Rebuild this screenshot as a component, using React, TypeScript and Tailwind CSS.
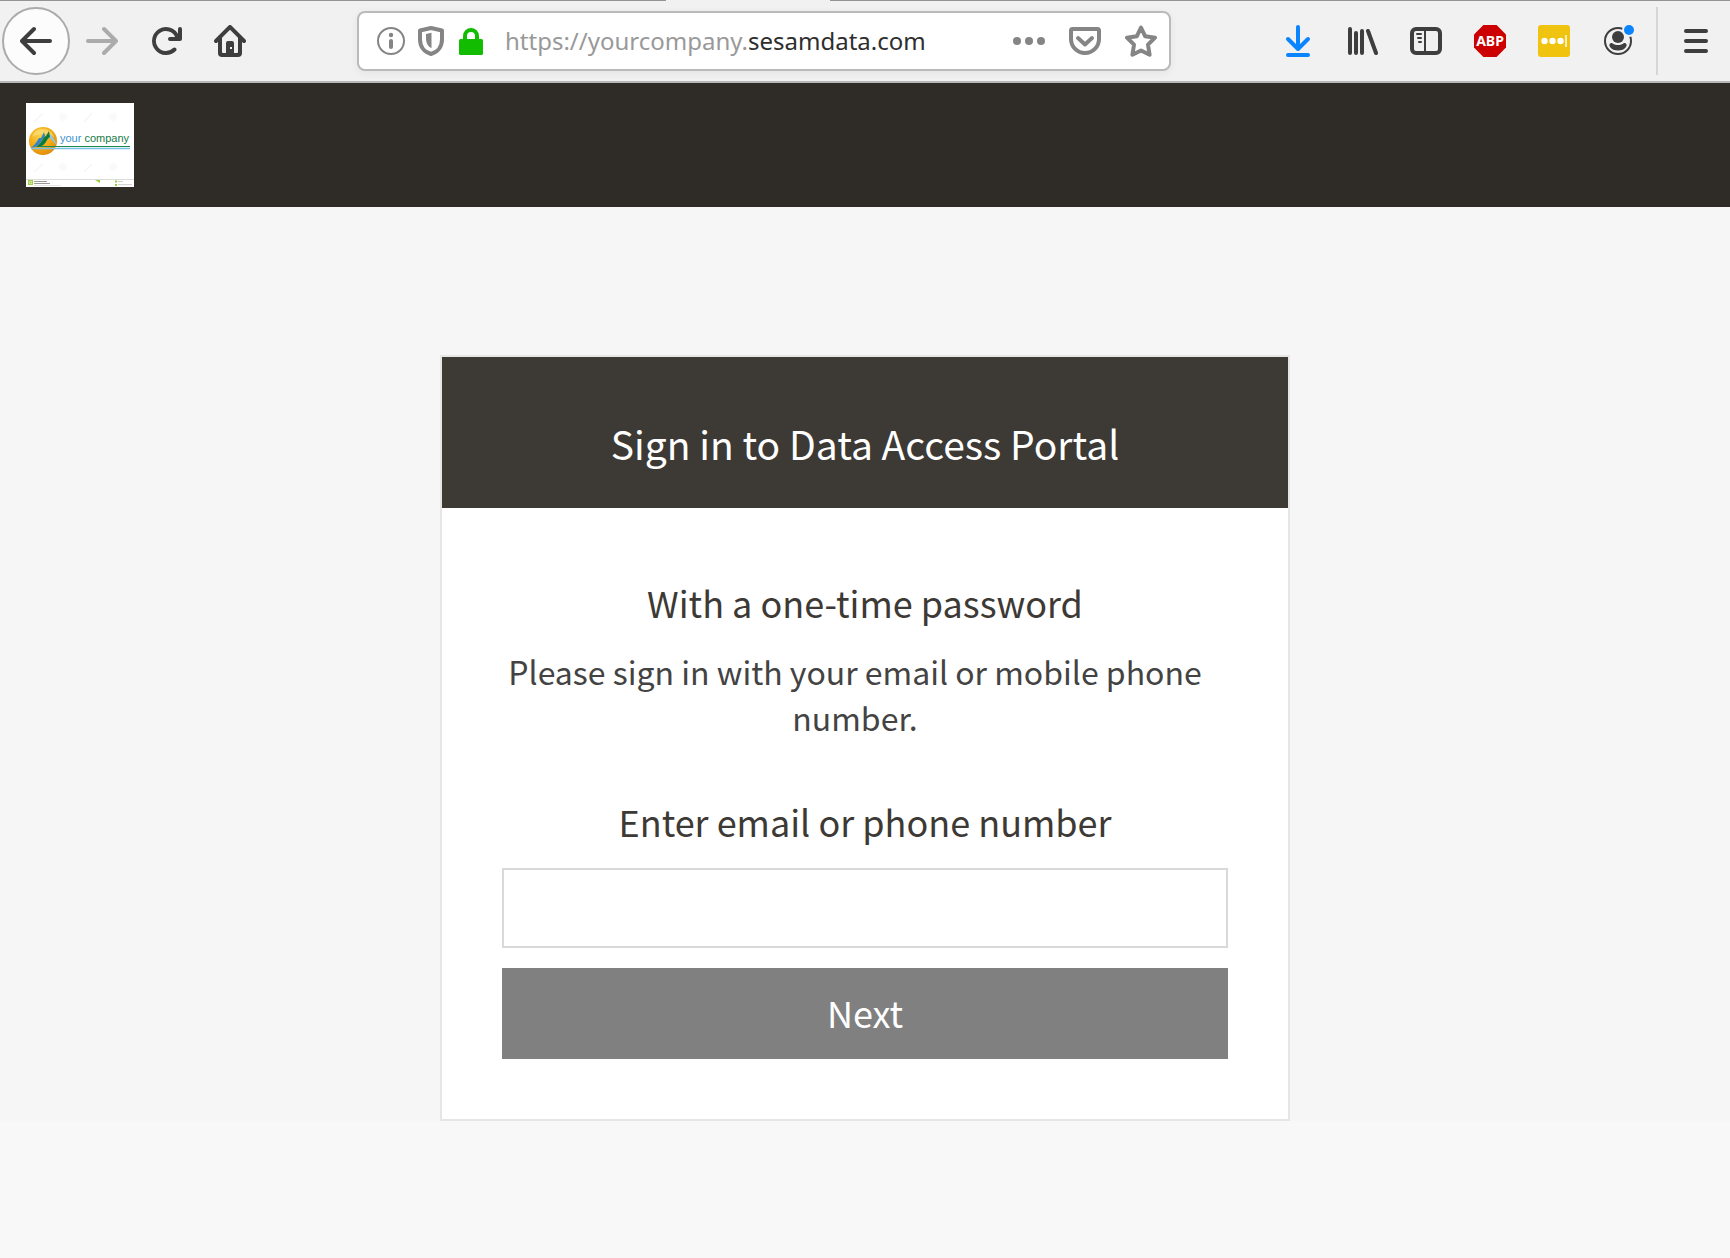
import React, { useId, useState } from "react";

type IconProps = { children: React.ReactNode; className?: string };

function Icon({ children, className = "" }: IconProps) {
  return (
    <svg viewBox="0 0 32 32" className={"block h-8 w-8 shrink-0 " + className} fill="currentColor" aria-hidden="true">
      {children}
    </svg>
  );
}

const ARROW_LEFT =
  "M15 7H3.414l4.293-4.293a1 1 0 0 0-1.414-1.414l-6 6a1 1 0 0 0 0 1.414l6 6a1 1 0 0 0 1.414-1.414L3.414 9H15a1 1 0 0 0 0-2z";
const RELOAD =
  "M15 1a1 1 0 0 0-1 1v2.418A6.995 6.995 0 1 0 8 15a6.954 6.954 0 0 0 4.95-2.05 1 1 0 0 0-1.414-1.414A5.019 5.019 0 1 1 12.549 6H10a1 1 0 0 0 0 2h5a1 1 0 0 0 1-1V2a1 1 0 0 0-1-1z";
const HOME =
  "M15.707 7.293l-7-7a1 1 0 0 0-1.414 0l-7 7a1 1 0 0 0 1.414 1.414L2 8.414V14a2 2 0 0 0 2 2h8a2 2 0 0 0 2-2V8.414l.293.293a1 1 0 0 0 1.414-1.414zM12 13.5a.5.5 0 0 1-.5.5H10V9a1 1 0 0 0-1-1H7a1 1 0 0 0-1 1v5H4.500a.5.5 0 0 1-.5-.5V6.414l4-4 4 4zM8 11h1v1H8z";

function TabEdge() {
  return (
    <div className="flex h-px bg-[#f1f1f1]">
      <div className="w-[38.5%] bg-[#949494]" />
      <div className="ml-auto w-[52%] bg-[#949494]" />
    </div>
  );
}

function NavButtons() {
  return (
    <div className="flex items-center gap-8 text-[#3e3e3e]">
      <div className="flex items-center gap-4">
        <button aria-label="Back" className="flex h-[68px] w-[68px] items-center justify-center rounded-full border-2 border-[#ababab] bg-[#fcfcfc]">
          <Icon><path transform="scale(2)" d={ARROW_LEFT} /></Icon>
        </button>
        <button aria-label="Forward" className="text-[#ababab]">
          <Icon><path transform="translate(32 0) scale(-2 2)" d={ARROW_LEFT} /></Icon>
        </button>
      </div>
      <button aria-label="Reload">
        <Icon><path transform="scale(2)" d={RELOAD} /></Icon>
      </button>
      <button aria-label="Home">
        <Icon><path transform="scale(2)" fillRule="evenodd" d={HOME} /></Icon>
      </button>
    </div>
  );
}

function AddressBar() {
  return (
    <div className="mx-[111px] flex h-[60px] min-w-0 flex-1 items-center rounded-lg border-2 border-[#bababa] bg-white pr-3 pl-4 text-[#858585] shadow-[0_2px_8px_rgba(0,0,0,0.06)]">
      <div className="flex items-center gap-2">
        <button aria-label="Site information">
          <Icon>
            <circle cx="16" cy="16" r="13" fill="none" stroke="currentColor" strokeWidth="2" />
            <circle cx="16" cy="10" r="2.200" />
            <rect x="14" y="14" width="4" height="10" rx="2" />
          </Icon>
        </button>
        <button aria-label="Tracking protection">
          <Icon>
            <path d="M16 3l11 2.500v9c0 7-4 12.500-11 14.500-7-2-11-7.500-11-14.500v-9z" fill="none" stroke="currentColor" strokeWidth="4" strokeLinejoin="round" />
            <path d="M16.500 7.800v15.400c-3.500-1.700-5.500-5-5.500-9V9z" />
          </Icon>
        </button>
        <button aria-label="Secure connection" className="text-[#12bc00]">
          <Icon>
            <path d="M10 16v-5a6 6 0 0 1 12 0v5" fill="none" stroke="currentColor" strokeWidth="4" />
            <rect x="4" y="14" width="24" height="16" rx="1.500" />
          </Icon>
        </button>
      </div>
      <div
        role="textbox"
        aria-label="Address"
        contentEditable
        suppressContentEditableWarning
        className="ml-[18px] min-w-0 flex-1 overflow-hidden font-['Noto_Sans','Open_Sans',sans-serif] text-[24px] leading-9 whitespace-nowrap text-[#999999] outline-none"
      >
        https://yourcompany.<span className="text-[#2e2e2e]">sesamdata.com</span>
      </div>
      <div className="flex items-center gap-6">
        <button aria-label="Page actions">
          <Icon>
            <circle cx="4" cy="16" r="4" />
            <circle cx="16" cy="16" r="4" />
            <circle cx="28" cy="16" r="4" />
          </Icon>
        </button>
        <button aria-label="Save to Pocket">
          <Icon>
            <path d="M3.500 4h25a1.500 1.500 0 0 1 1.500 1.500V14a14 14 0 0 1-28 0V5.500A1.500 1.500 0 0 1 3.500 4z" fill="none" stroke="currentColor" strokeWidth="4" />
            <path d="M9 13l7 6.500 7-6.500" fill="none" stroke="currentColor" strokeWidth="4" strokeLinecap="round" strokeLinejoin="round" />
          </Icon>
        </button>
        <button aria-label="Bookmark this page">
          <Icon>
            <path d="M16 2.500l4.200 8.800 9.800 1.400-7 7 1.600 10L16 25.500l-8.600 4.200 1.600-10-7-7 9.800-1.400z" fill="none" stroke="currentColor" strokeWidth="4" strokeLinejoin="round" />
          </Icon>
        </button>
      </div>
    </div>
  );
}

function ToolbarActions() {
  return (
    <div className="flex items-center text-[#3e3e3e]">
      <div className="flex items-center gap-8">
        <button aria-label="Downloads" className="text-[#0a84ff]">
          <Icon>
            <path d="M16 2v21M6 14l10 10 10-10M6 30h20" fill="none" stroke="currentColor" strokeWidth="4" strokeLinecap="round" strokeLinejoin="round" />
          </Icon>
        </button>
        <button aria-label="Library">
          <Icon>
            <path d="M4 4v24M10 8v20M16 6v22M22 6l8 22" fill="none" stroke="currentColor" strokeWidth="4" strokeLinecap="round" />
          </Icon>
        </button>
        <button aria-label="Sidebars">
          <Icon>
            <rect x="2" y="4" width="28" height="24" rx="4" fill="none" stroke="currentColor" strokeWidth="4" />
            <path d="M15 4v24" stroke="currentColor" strokeWidth="2" />
            <path d="M7 9h4M8 13h3M9 17h2" stroke="currentColor" strokeWidth="2" strokeLinecap="round" />
          </Icon>
        </button>
        <button aria-label="Adblock Plus">
          <Icon>
            <path d="M9.400 0h13.200L32 9.400v13.200L22.600 32H9.400L0 22.600V9.400z" fill="#cc0000" />
            <text x="16" y="21" textAnchor="middle" fill="#ffffff" fontSize="14" fontWeight="700" fontFamily="'Noto Sans','Open Sans',sans-serif">ABP</text>
          </Icon>
        </button>
        <button aria-label="Password manager">
          <Icon>
            <rect width="32" height="32" rx="3" fill="#f0c30f" />
            <circle cx="6.500" cy="16" r="3.200" fill="#ffffff" />
            <circle cx="14.500" cy="16" r="3.200" fill="#ffffff" />
            <circle cx="22.500" cy="16" r="3.200" fill="#ffffff" />
            <rect x="27" y="10" width="2" height="12" fill="#fbeeb8" />
          </Icon>
        </button>
        <button aria-label="Account">
          <Icon>
            <circle cx="16" cy="16" r="13" fill="none" stroke="currentColor" strokeWidth="2" />
            <circle cx="16" cy="12" r="6" />
            <path d="M9 18c1.500-.5 2.500 2 7 2s5.500-2.500 7-2c2 .500 2 2.500 1 4-1.500 2.500-4.500 3.500-8 3.500S9.500 24.500 8 22c-1-1.500-1-3.500 1-4z" />
            <circle cx="27" cy="5" r="7" fill="#f1f1f1" />
            <circle cx="27" cy="5" r="5" fill="#0a84ff" />
          </Icon>
        </button>
      </div>
      <div className="mr-[22px] ml-[22px] h-[68px] w-0.5 bg-[#d6d6d6]" />
      <button aria-label="Open menu">
        <Icon>
          <path d="M6 6h20M6 16h20M6 26h20" stroke="currentColor" strokeWidth="4" strokeLinecap="round" />
        </Icon>
      </button>
    </div>
  );
}

function CompanyLogo() {
  return (
    <svg viewBox="0 0 108 84" className="block h-[84px] w-[108px]" role="img" aria-label="your company">
      <defs>
        <radialGradient id="sun" cx="0.4" cy="0.3" r="0.75">
          <stop offset="0" stopColor="#fbd24a" />
          <stop offset="0.6" stopColor="#f3a712" />
          <stop offset="1" stopColor="#dd8a0c" />
        </radialGradient>
      </defs>
      <rect width="108" height="84" fill="#ffffff" />
      <g stroke="#f7f7f7" strokeWidth="1.500">
        <path d="M8 19l9-9M58 19l8-9M8 69l9-8M58 69l8-8" />
      </g>
      <g fill="#fafafa">
        <circle cx="37" cy="14" r="4" />
        <circle cx="87" cy="14" r="4" />
        <circle cx="37" cy="64" r="4" />
        <circle cx="87" cy="64" r="4" />
      </g>
      <circle cx="17" cy="38" r="14" fill="url(#sun)" />
      <path d="M6 34c2-7 7-8 11-8s9 2 11 8c-7-4-15-4-22 0z" fill="#fde58c" opacity="0.6" />
      <path d="M23 34l2-3 6 11c-3-2-5-5-8-8z" fill="#8cc6e8" />
      <path d="M5 45c4-3 6-7 8-10l2 0 3-6 1 4c-2 2-3 4-4 6-2 3-4 5-10 6z" fill="#2f86c6" />
      <path d="M10 44c5-3 6-7 8-10l2-1 3-5 1 6c-2 1-3 3-4 5-2 3-5 5-10 5z" fill="#0d7a3c" />
      <path d="M13 43.500h91" stroke="#1b8a4f" strokeWidth="1" />
      <path d="M5 45.500h99" stroke="#7cc0e6" strokeWidth="1.500" />
      <text x="34" y="39" fontSize="11" fontFamily="'Liberation Sans',Arial,sans-serif" fill="#3b93cf">
        your <tspan fill="#177a48">company</tspan>
      </text>
      <rect y="76" width="108" height="1" fill="#dcdcdc" />
      <rect x="2" y="77" width="5" height="5" fill="#9ccb3b" />
      <circle cx="4.500" cy="79.500" r="1.300" fill="none" stroke="#ffffff" strokeWidth="0.700" />
      <path d="M8 78.500h13M8 80.500h16" stroke="#9a9a9a" strokeWidth="1" />
      <path d="M8 82.500h27" stroke="#dcdcdc" strokeWidth="0.700" />
      <path d="M69 77l5 0 0 3z" fill="#9ccb3b" />
      <path d="M89 77.500h2v2h-2zM89 81h2v2h-2z" fill="#9ccb3b" />
      <path d="M92 78.500h5M92 81.700h14" stroke="#cccccc" strokeWidth="1" />
    </svg>
  );
}

function SignInCard() {
  const [value, setValue] = useState("");
  const id = useId();
  return (
    <section className="mx-auto w-full max-w-[850px] border-2 border-[#e6e6e6] bg-white text-center text-[#3d3935]">
      <h1 className="bg-[#3d3935] pt-14 pb-[35px] text-[39px] leading-[60px] text-white">Sign in to Data Access Portal</h1>
      <form className="flex flex-col px-[60px] pt-[68px] pb-[60px]" onSubmit={(e) => e.preventDefault()}>
        <h2 className="text-[36px] leading-[52px]">With a one-time password</h2>
        <p className="mt-5 mr-5 text-[32px] leading-[46px] text-[#434343]">
          Please sign in with your email or mobile phone number.
        </p>
        <label htmlFor={id} className="mt-[55px] text-[36px] leading-[52px]">
          Enter email or phone number
        </label>
        <input
          id={id}
          type="text"
          value={value}
          onChange={(e) => setValue(e.target.value)}
          className="mt-[21px] h-20 w-full border-2 border-[#d9d9d9] bg-white px-4 text-[32px] outline-none"
        />
        <button type="submit" className="mt-5 h-[91px] w-full bg-[#808080] pb-1 text-[36px] leading-[52px] text-white">
          Next
        </button>
      </form>
    </section>
  );
}

export default function App() {
  return (
    <div className="flex min-h-screen flex-col bg-[#f8f8f8] font-['Noto_Sans_CJK_SC',sans-serif]">
      <div className="border-b-2 border-[#b8b8b8] bg-[#f1f1f1]">
        <TabEdge />
        <div className="flex h-20 items-center pr-[18px] pl-0.5">
          <NavButtons />
          <AddressBar />
          <ToolbarActions />
        </div>
      </div>
      <header className="bg-[#2f2b27] px-[26px] py-5">
        <a href="#" className="inline-block align-top">
          <CompanyLogo />
        </a>
      </header>
      <main className="bg-[#f6f6f6] pt-[148px]">
        <SignInCard />
      </main>
    </div>
  );
}
